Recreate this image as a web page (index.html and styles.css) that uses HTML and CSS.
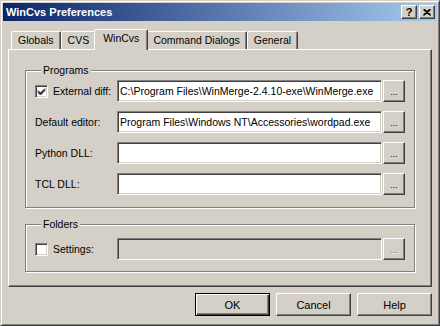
FILE: index.html
```html
<!DOCTYPE html>
<html lang="en">
<head>
    <meta charset="UTF-8">
    <title>WinCvs Preferences</title>
    <link rel="stylesheet" href="styles.css">
</head>
<body>
    <div class="window">
        <div class="titlebar">
            <span class="title">WinCvs Preferences</span>
            <div class="caption-buttons">
                <span class="cap-btn">?</span>
                <span class="cap-btn">
                    <svg width="8" height="7" viewBox="0 0 8 7">
                        <path d="M0.5 0.5 L7.5 6.5 M1.5 0.5 L7.5 5.6 M7.5 0.5 L0.5 6.5 M6.5 0.5 L0.5 5.6" stroke="#000" stroke-width="1.1" fill="none"/>
                    </svg>
                </span>
            </div>
        </div>

        <div class="dialog">
            <div class="tabs">
                <span class="tab">Globals</span>
                <span class="tab">CVS</span>
                <span class="tab active">WinCvs</span>
                <span class="tab">Command Dialogs</span>
                <span class="tab">General</span>
            </div>

            <div class="panel">
                <fieldset class="group programs">
                    <legend>Programs</legend>
                    <div class="row">
                        <label class="label">
                            <span class="box">
                                <svg width="9" height="9" viewBox="0 0 9 9">
                                    <path d="M1 3.5 L3.5 6 L8 1.5 M1 4.5 L3.5 7 L8 2.5 M1 5.5 L3.5 8 L8 3.5" stroke="#000" stroke-width="1" fill="none"/>
                                </svg>
                            </span>
                            External diff:
                        </label>
                        <input class="field" type="text" value="C:\Program Files\WinMerge-2.4.10-exe\WinMerge.exe">
                        <button type="button" class="browse">...</button>
                    </div>
                    <div class="row">
                        <label class="label">Default editor:</label>
                        <input class="field" type="text" value="Program Files\Windows NT\Accessories\wordpad.exe">
                        <button type="button" class="browse">...</button>
                    </div>
                    <div class="row">
                        <label class="label">Python DLL:</label>
                        <input class="field" type="text" value="">
                        <button type="button" class="browse">...</button>
                    </div>
                    <div class="row">
                        <label class="label">TCL DLL:</label>
                        <input class="field" type="text" value="">
                        <button type="button" class="browse">...</button>
                    </div>
                </fieldset>

                <fieldset class="group folders">
                    <legend>Folders</legend>
                    <div class="row">
                        <label class="label"><span class="box"></span>Settings:</label>
                        <input class="field" type="text" value="" disabled>
                        <button type="button" class="browse" disabled>...</button>
                    </div>
                </fieldset>
            </div>

            <div class="actions">
                <button type="button" class="btn default">OK</button>
                <button type="button" class="btn">Cancel</button>
                <button type="button" class="btn">Help</button>
            </div>
        </div>
    </div>
</body>
</html>
```

FILE: styles.css
```css
body {
    margin: 0;
    font-family: "Liberation Sans", Arial, sans-serif;
    font-size: 10.5px;
    color: #000;
    background: #d4d0c8;
}
.window {
    width: 440px;
    height: 326px;
    box-sizing: border-box;
    background: #d4d0c8;
    border: 1px solid;
    border-color: #d4d0c8 #404040 #404040 #d4d0c8;
    box-shadow: inset 1px 1px #fff, inset -1px -1px #808080;
    padding: 2px;
    display: flex;
    flex-direction: column;
}
.titlebar {
    height: 18px;
    flex: none;
    display: flex;
    align-items: center;
    justify-content: space-between;
    padding-left: 3px;
    background: linear-gradient(to right, #0a246a, #a6caf0);
}
.title {
    color: #fff;
    font-weight: bold;
    font-size: 11px;
}
.caption-buttons {
    display: flex;
    gap: 2px;
    margin-right: 2px;
}
.cap-btn {
    width: 16px;
    height: 14px;
    box-sizing: border-box;
    background: #d4d0c8;
    border: 1px solid;
    border-color: #fff #404040 #404040 #fff;
    box-shadow: inset -1px -1px #808080;
    display: flex;
    align-items: center;
    justify-content: center;
    font-weight: bold;
    font-size: 11px;
    line-height: 12px;
}
.dialog {
    flex: 1;
    display: flex;
    flex-direction: column;
    padding: 8px 5px 0 5px;
}
.tabs {
    display: flex;
    align-items: flex-end;
    height: 20px;
    padding-left: 3px;
}
.tab {
    height: 18px;
    box-sizing: border-box;
    padding: 2px 6px 0 6px;
    border: 1px solid;
    border-bottom: none;
    border-color: #fff #404040 #fff #fff;
    border-radius: 2px 2px 0 0;
    box-shadow: inset -1px 0 #808080;
    white-space: nowrap;
}
.tab.active {
    height: 21px;
    margin: 0 -2px -1px -2px;
    padding: 2px 8px 0 8px;
    background: #d4d0c8;
    z-index: 1;
}
.panel {
    height: 238px;
    flex: none;
    box-sizing: border-box;
    border: 1px solid;
    border-color: #fff #404040 #404040 #fff;
    box-shadow: inset -1px -1px #808080;
    padding: 14px 16px 0 16px;
}
.group {
    margin: 0;
    padding: 3px 9px 12px 9px;
    border: 1px solid #808080;
    box-shadow: inset 1px 1px #fff, 1px 1px #fff;
    display: flex;
    flex-direction: column;
    gap: 9px;
}
.group legend {
    margin-left: 6px;
    padding: 0 2px;
    line-height: 13px;
    background: #d4d0c8;
}
.folders {
    margin-top: 10px;
    padding-top: 7px;
    padding-bottom: 11px;
}
.row {
    display: flex;
    align-items: center;
    height: 22px;
}
.label {
    width: 82px;
    flex: none;
    display: flex;
    align-items: center;
    white-space: nowrap;
}
.box {
    width: 13px;
    height: 13px;
    box-sizing: border-box;
    margin-right: 5px;
    background: #fff;
    border: 1px solid;
    border-color: #808080 #fff #fff #808080;
    box-shadow: inset 1px 1px #404040, inset -1px -1px #d4d0c8;
    display: flex;
    align-items: center;
    justify-content: center;
}
.field {
    flex: 1;
    min-width: 0;
    height: 22px;
    box-sizing: border-box;
    margin: 0;
    padding: 0 2px;
    font: inherit;
    color: #000;
    background: #fff;
    border: 1px solid;
    border-color: #808080 #fff #fff #808080;
    box-shadow: inset 1px 1px #404040, inset -1px -1px #d4d0c8;
    outline: none;
}
.field:disabled {
    background: #d4d0c8;
}
.browse {
    width: 22px;
    height: 22px;
    flex: none;
    margin: 0 0 0 1px;
    padding: 0 0 4px 0;
    box-sizing: border-box;
    font: inherit;
    font-size: 9px;
    line-height: 9px;
    color: #000;
    background: #d4d0c8;
    border: 1px solid;
    border-color: #fff #404040 #404040 #fff;
    box-shadow: inset -1px -1px #808080;
    display: flex;
    align-items: flex-end;
    justify-content: center;
}
.browse:disabled {
    color: #808080;
    text-shadow: 1px 1px #fff;
}
.actions {
    display: flex;
    justify-content: flex-end;
    gap: 6px;
    margin-top: 6px;
}
.btn {
    width: 75px;
    height: 23px;
    box-sizing: border-box;
    margin: 0;
    padding: 0;
    font: inherit;
    font-size: 11px;
    color: #000;
    background: #d4d0c8;
    border: 1px solid;
    border-color: #fff #404040 #404040 #fff;
    box-shadow: inset -1px -1px #808080;
}
.btn.default {
    border-color: #000;
    box-shadow: inset 1px 1px #fff, inset -1px -1px #404040, inset -2px -2px #808080;
}
```
